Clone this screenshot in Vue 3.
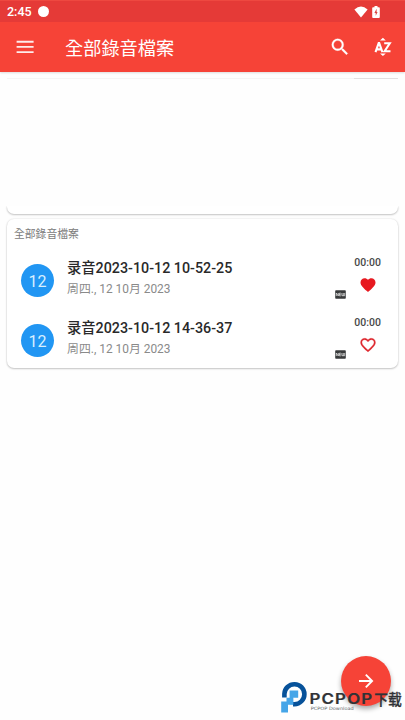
<script setup>
const recordings = [
  { day: '12', name: '录音2023-10-12 10-52-25', date: '周四., 12 10月 2023', length: '00:00', favorite: true },
  { day: '12', name: '录音2023-10-12 14-36-37', date: '周四., 12 10月 2023', length: '00:00', favorite: false }
]
</script>

<template>
  <div class="screen">
    <header class="header">
      <div class="status">
        <span class="clock">2:45</span>
        <i class="dot"></i>
        <svg class="wifi" width="14" height="12" viewBox="0 0 14 12"><path d="M7 11.6.4 3.5Q7-2.6 13.6 3.5Z" fill="#fff" /></svg>
        <svg class="battery" width="8" height="12" viewBox="0 0 8 12">
          <path d="M2.5 0h3v1.2h1.4q.9 0 .9.9v9q0 .9-.9.9H1.1q-.9 0-.9-.9v-9q0-.9.9-.9h1.4Z" fill="#fff" />
          <path d="M4.6 2.8 2.4 7h1.3v2.8L5.6 6H4.6Z" fill="#d9433f" />
        </svg>
      </div>
      <div class="toolbar">
        <svg class="menu" width="18" height="14" viewBox="0 0 18 14"><path d="M.6 1.7h17M.6 6.9h17M.6 12.1h17" stroke="#fff" stroke-opacity=".9" stroke-width="1.9" /></svg>
        <h1>全部錄音檔案</h1>
        <svg class="search" width="22" height="22" viewBox="0 0 24 24"><path fill="#fff" stroke="#fff" stroke-width=".3" d="M15.5 14h-.79l-.28-.27A6.47 6.47 0 0 0 16 9.5 6.5 6.5 0 1 0 9.5 16c1.61 0 3.09-.59 4.23-1.57l.27.28v.79l5 4.99L20.49 19l-4.99-5zm-6 0a4.5 4.5 0 1 1 0-9 4.5 4.5 0 0 1 0 9z" /></svg>
        <svg class="sort" width="18" height="20" viewBox="0 0 18 20">
          <path d="M6 3.4 8.9.8l2.9 2.6ZM6 16.5l2.9 2.6 2.9-2.6Z" fill="#fff" />
          <path d="m1.5 15.1 3.2-9h.5l3.2 9M2.6 12.4h4.7M10.2 6.2h5.6l-5.2 8h5.9" fill="none" stroke="#fff" stroke-width="2.1" />
        </svg>
      </div>
    </header>

    <main>
      <div class="rule"><i></i></div>
      <div class="gap"></div>
      <section class="card previous"></section>
      <section class="card list">
        <h2>全部錄音檔案</h2>
        <article v-for="item in recordings" :key="item.name" class="row">
          <span class="day">{{ item.day }}</span>
          <div class="info">
            <div class="name">{{ item.name }}</div>
            <div class="date">{{ item.date }}</div>
          </div>
          <svg class="new" width="11" height="9" viewBox="0 0 11 9">
            <rect x=".2" y=".2" width="10.6" height="8.6" rx=".8" fill="#383a3b" />
            <path d="M1.3 6V3l2 3V3M5.9 3.2H4.4v2.6h1.5M4.4 4.5h1.3M6.9 3v2.7h2.8V3M8.3 3v2.7" fill="none" stroke="#e8e8e8" stroke-width=".75" />
          </svg>
          <div class="side">
            <span class="length">{{ item.length }}</span>
            <svg width="18" height="18" viewBox="0 0 24 24">
              <path v-if="item.favorite" fill="#e71920" d="m12 21.35-1.45-1.32C5.4 15.36 2 12.28 2 8.5 2 5.42 4.42 3 7.5 3c1.74 0 3.41.81 4.5 2.09C13.09 3.81 14.76 3 16.5 3 19.58 3 22 5.42 22 8.5c0 3.78-3.4 6.86-8.55 11.54L12 21.35z" />
              <path v-else fill="#df2b31" stroke="#df2b31" stroke-width=".3" d="M16.5 3c-1.74 0-3.41.81-4.5 2.09C10.91 3.81 9.24 3 7.5 3 4.42 3 2 5.42 2 8.5c0 3.78 3.4 6.86 8.55 11.54L12 21.35l1.45-1.32C18.6 15.36 22 12.28 22 8.5 22 5.42 19.58 3 16.5 3zm-4.4 15.55-.1.1-.1-.1C7.14 14.24 4 11.39 4 8.5 4 6.5 5.5 5 7.5 5c1.54 0 3.04.99 3.57 2.36h1.87C13.46 5.99 14.96 5 16.5 5c2 0 3.5 1.5 3.5 3.5 0 2.89-3.14 5.74-7.9 10.05z" />
            </svg>
          </div>
        </article>
      </section>
    </main>

    <button class="fab" aria-label="下一步">
      <svg width="16" height="16" viewBox="0 0 16 16"><path d="M1 8h13M7.8 1.7 14.1 8l-6.3 6.3" fill="none" stroke="#fff" stroke-width="1.9" /></svg>
    </button>

    <svg class="brand" width="125" height="34" viewBox="0 0 125 34">
      <path d="M4.4 16.6V12.9A10 10 0 1 1 14.5 23.2H13" fill="none" stroke="#07529a" stroke-width="4.6" />
      <path d="M9.6 9.6h8.6v7.2h-5v6.4h-3.6Z" fill="#45a5e8" />
      <path d="M1.2 20.4h5.3v-3.6h6.7v7H8v7.6H1.2Z" fill="#45a5e8" />
      <text class="brand-name" x="29.4" y="23.2" textLength="64" lengthAdjust="spacingAndGlyphs">PCPOP</text>
      <text class="brand-cn" x="94.3" y="23.6" textLength="27.6" lengthAdjust="spacingAndGlyphs">下载</text>
      <text class="brand-sub" x="30.8" y="29.3" textLength="43" lengthAdjust="spacingAndGlyphs">PCPOP Download</text>
    </svg>
  </div>
</template>

<style>
body { margin: 0; background: #fefefe; }
</style>

<style scoped>
.screen { position: relative; height: 720px; overflow: hidden; background: #fefefe; font-family: Roboto, "Noto Sans CJK SC", sans-serif; }
.header { height: 72px; background: #f64337; box-shadow: 0 1px 2px #0002; }
.status { display: flex; align-items: center; height: 22px; box-sizing: border-box; padding: 0 25px 0 7px; background: #e53a37; border-top: 1px solid #ee4840; }
.clock { width: 26px; color: #fff; font-size: 12.5px; font-weight: 500; line-height: 20px; }
.dot { width: 11px; height: 11px; margin-left: 5px; border-radius: 50%; background: #fff; }
.wifi { margin-left: auto; }
.battery { margin-left: 4px; }
.toolbar { display: flex; align-items: center; height: 50px; box-sizing: border-box; padding: 0 13px 0 16px; }
.menu { margin-bottom: 1px; }
h1 { margin: 0 auto 0 31px; color: #fff; font: 400 18.2px/28px "Noto Sans CJK TC", sans-serif; }
.search { margin-right: 23px; }
main { display: flex; flex-direction: column; }
.rule { display: flex; justify-content: flex-end; height: 1px; margin: 6px 7px 0; background: #f5f5f5; }
.rule i { width: 44px; height: 1px; background: #e2dfe0; }
.gap { height: 127px; }
.card { margin: 0 7px; background: #fff; box-shadow: 0 1px 2px #0003, 0 0 2px #0002; }
.previous { height: 8px; border-radius: 0 0 7px 7px; clip-path: inset(0 -3px -4px); }
.list { height: 149px; margin-top: 5px; border-radius: 7px; overflow: hidden; }
h2 { margin: 5px 0 0 7px; color: #7b7b7b; font: 400 10.8px/18px "Noto Sans CJK TC", sans-serif; }
.row { display: flex; height: 60px; box-sizing: border-box; padding: 9px 17px 0 15px; }
.day { width: 33px; height: 33px; margin: 13px 0 0 -1px; border-radius: 50%; background: #2196f3; color: #d8efff; font-size: 16px; line-height: 35px; text-align: center; flex: none; }
.info { margin-left: 13px; padding-top: 7px; white-space: nowrap; }
.name { color: #292929; font-size: 14.3px; font-weight: 500; line-height: 21px; }
.date { color: #8a8a8a; font-size: 11.9px; line-height: 20px; }
.new { margin: 39px 8px 0 auto; }
.side { display: flex; flex-direction: column; align-items: center; padding-top: 5px; }
.length { color: #484848; font-size: 10.5px; font-weight: 500; line-height: 14px; margin-bottom: 6px; }
.fab { position: absolute; left: 341px; top: 656px; display: grid; place-items: center; width: 50px; height: 50px; padding: 0; border: 0; border-radius: 50%; background: #f64337; box-shadow: 0 3px 5px #0005; }
.brand { position: absolute; left: 280px; top: 681px; }
.brand-name { font: 600 14px Inter, sans-serif; letter-spacing: 1px; fill: #303236; stroke: #303236; stroke-width: .2; }
.brand-cn { font: 500 15px "Noto Sans CJK SC", sans-serif; fill: #303236; stroke: #303236; stroke-width: .3; }
.brand-sub { font: 400 4.5px "DejaVu Sans", sans-serif; fill: #606469; }
</style>
